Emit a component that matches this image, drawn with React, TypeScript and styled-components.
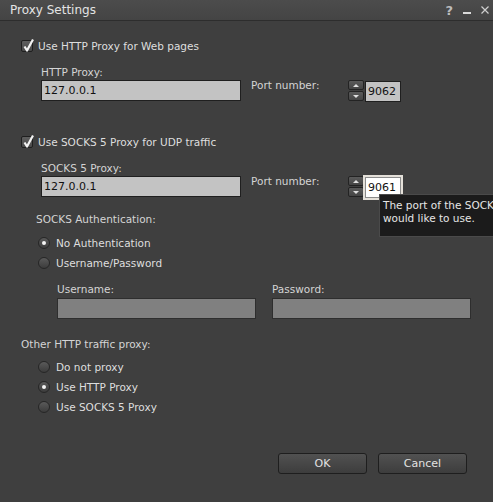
import React from 'react';
import styled, { createGlobalStyle } from 'styled-components';

const GlobalStyle = createGlobalStyle`
    html, body {
        margin: 0;
        padding: 0;
        background: #3f3f3f;
    }
    body {
        font-family: "DejaVu Sans", "Liberation Sans", sans-serif;
    }
`;

const Window = styled.div`
    position: relative;
    width: 493px;
    height: 502px;
    background: #3f3f3f;
    overflow: hidden;
    display: flex;
    flex-direction: column;
`;

const TitleBar = styled.div`
    height: 20px;
    flex-shrink: 0;
    display: flex;
    align-items: center;
    padding: 0 4px 0 10px;
    background: linear-gradient(#4c4c4c, #444444);
    border-bottom: 1px solid #2d2d2d;
`;

const Title = styled.span`
    flex: 1;
    font-size: 12px;
    color: #e4e4e4;
`;

const TitleIcons = styled.div`
    display: flex;
    align-items: center;
    gap: 10px;
`;

const HelpIcon = styled.span`
    font-size: 13px;
    font-weight: bold;
    color: #bcbcbc;
    line-height: 13px;
`;

const MinimizeIcon = styled.span`
    width: 8px;
    height: 2px;
    margin-top: 6px;
    background: #dadada;
`;

const Body = styled.div`
    flex: 1;
    display: flex;
    flex-direction: column;
    padding-left: 21px;
`;

const CheckRow = styled.label<{ $top: number }>`
    display: flex;
    align-items: center;
    gap: 5px;
    height: 12px;
    margin-top: ${p => p.$top}px;
    font-size: 10.5px;
    line-height: 12px;
    color: #dedede;
`;

const CheckBox = styled.span`
    position: relative;
    width: 12px;
    height: 12px;
    box-sizing: border-box;
    border: 1px solid #1f1f1f;
    border-radius: 2px;
    background: linear-gradient(#5e5e5e, #4a4a4a);

    svg {
        position: absolute;
        left: 0;
        top: -3px;
    }
`;

const Caption = styled.div<{ $top: number; $left: number }>`
    margin-top: ${p => p.$top}px;
    margin-left: ${p => p.$left}px;
    height: 12px;
    font-size: 10.5px;
    line-height: 12px;
    color: #d4d4d4;
`;

const InputRow = styled.div<{ $top: number }>`
    display: flex;
    align-items: flex-start;
    margin-top: ${p => p.$top}px;
    margin-left: 20px;
`;

const TextInput = styled.input<{ $width: number }>`
    box-sizing: border-box;
    width: ${p => p.$width}px;
    height: 21px;
    margin: 0;
    padding: 0 2px;
    border: 1px solid #1f1f1f;
    background: #c3c3c3;
    color: #111;
    font-family: "DejaVu Sans", sans-serif;
    font-size: 11px;
    outline: none;

    &:disabled {
        background: #808080;
        border-color: #2e2e2e;
    }
`;

const PortLabel = styled.span`
    width: 97px;
    margin-top: -1px;
    margin-left: 10px;
    font-size: 10.5px;
    line-height: 12px;
    color: #d4d4d4;
`;

const Spinner = styled.div`
    display: flex;
    flex-direction: column;
    gap: 1px;
    width: 16px;
    margin-right: 1px;
`;

const SpinButton = styled.span<{ $down?: boolean }>`
    box-sizing: border-box;
    height: 10px;
    display: flex;
    align-items: center;
    justify-content: center;
    border: 1px solid #232323;
    border-radius: 2px;
    background: linear-gradient(#5a5a5a, #444444);

    &::after {
        content: "";
        border-left: 3px solid transparent;
        border-right: 3px solid transparent;
        ${p => (p.$down ? 'border-top: 3px solid #e0e0e0;' : 'border-bottom: 3px solid #e0e0e0;')}
    }
`;

const PortField = styled.div`
    position: relative;
`;

const PortInput = styled(TextInput)<{ $focused?: boolean }>`
    ${p =>
        p.$focused &&
        `
        background: #ffffff;
        border-color: #8a8a8a;
        box-shadow: 0 0 0 2px #e4e0d9;
    `}
`;

const Tooltip = styled.div`
    position: absolute;
    left: 14px;
    top: 18px;
    padding: 4px 8px 11px 3px;
    background: #1b1b1b;
    border: 1px solid #4a4a4a;
    font-size: 10.5px;
    line-height: 13px;
    color: #e6e6e6;
    white-space: nowrap;
    z-index: 2;
`;

const RadioRow = styled.label<{ $top: number }>`
    display: flex;
    align-items: center;
    gap: 6px;
    height: 12px;
    margin-top: ${p => p.$top}px;
    margin-left: 17px;
    font-size: 10.5px;
    line-height: 12px;
    color: #dedede;
`;

const RadioDot = styled.span<{ $checked?: boolean }>`
    width: 12px;
    height: 12px;
    box-sizing: border-box;
    border: 1px solid #262626;
    border-radius: 50%;
    background: linear-gradient(#5a5a5a, #3c3c3c);
    display: flex;
    align-items: center;
    justify-content: center;

    &::after {
        content: "";
        width: 4px;
        height: 4px;
        border-radius: 50%;
        background: ${p => (p.$checked ? '#f4f4f4' : 'transparent')};
    }
`;

const CredentialGrid = styled.div`
    display: grid;
    grid-template-columns: 199px 199px;
    column-gap: 16px;
    margin-left: 36px;
`;

const CredentialLabel = styled.span`
    margin-top: 14px;
    height: 12px;
    font-size: 10.5px;
    line-height: 12px;
    color: #d4d4d4;
`;

const CredentialInput = styled(TextInput)`
    margin-top: 3px;
`;

const ButtonRow = styled.div`
    display: flex;
    justify-content: flex-end;
    gap: 11px;
    margin-top: 40px;
    padding-right: 26px;
`;

const Button = styled.button`
    box-sizing: border-box;
    width: 89px;
    height: 21px;
    border: 1px solid #1e1e1e;
    border-radius: 3px;
    background: linear-gradient(#515151, #3d3d3d);
    color: #e2e2e2;
    font-family: "DejaVu Sans", sans-serif;
    font-size: 11px;
    padding: 0;
`;

const Check = () => (
    <CheckBox>
        <svg width="13" height="15" viewBox="0 0 13 15">
            <polyline points="2.5,8.5 5,12.5 11,1.5" fill="none" stroke="#f2f2f2" strokeWidth="2.2" strokeLinejoin="round" />
        </svg>
    </CheckBox>
);

const PortControl = ({ value, focused }: { value: string; focused?: boolean }) => (
    <>
        <Spinner>
            <SpinButton />
            <SpinButton $down />
        </Spinner>
        <PortField>
            <PortInput $width={36} $focused={focused} readOnly defaultValue={value} />
            {focused && (
                <Tooltip>
                    The port of the SOCKS 5 proxy you
                    <br />
                    would like to use.
                </Tooltip>
            )}
        </PortField>
    </>
);

export default function App() {
    return (
        <Window>
            <GlobalStyle />

            <TitleBar>
                <Title>Proxy Settings</Title>
                <TitleIcons>
                    <HelpIcon>?</HelpIcon>
                    <MinimizeIcon />
                    <svg width="8" height="8" viewBox="0 0 8 8">
                        <path d="M0.5 0.5 L7.5 7.5 M7.5 0.5 L0.5 7.5" stroke="#cfcfcf" strokeWidth="1.2" />
                    </svg>
                </TitleIcons>
            </TitleBar>

            <Body>
                <CheckRow $top={19}>
                    <Check />
                    Use HTTP Proxy for Web pages
                </CheckRow>

                <Caption $top={14} $left={20}>HTTP Proxy:</Caption>
                <InputRow $top={2}>
                    <TextInput $width={200} readOnly defaultValue="127.0.0.1" />
                    <PortLabel>Port number:</PortLabel>
                    <PortControl value="9062" />
                </InputRow>

                <CheckRow $top={34}>
                    <Check />
                    Use SOCKS 5 Proxy for UDP traffic
                </CheckRow>

                <Caption $top={14} $left={20}>SOCKS 5 Proxy:</Caption>
                <InputRow $top={2}>
                    <TextInput $width={200} readOnly defaultValue="127.0.0.1" />
                    <PortLabel>Port number:</PortLabel>
                    <PortControl value="9061" focused />
                </InputRow>

                <Caption $top={15} $left={15}>SOCKS Authentication:</Caption>
                <RadioRow $top={12}>
                    <RadioDot $checked />
                    No Authentication
                </RadioRow>
                <RadioRow $top={8}>
                    <RadioDot />
                    Username/Password
                </RadioRow>

                <CredentialGrid>
                    <CredentialLabel>Username:</CredentialLabel>
                    <CredentialLabel>Password:</CredentialLabel>
                    <CredentialInput $width={199} disabled />
                    <CredentialInput $width={199} disabled />
                </CredentialGrid>

                <Caption $top={19} $left={0}>Other HTTP traffic proxy:</Caption>
                <RadioRow $top={11}>
                    <RadioDot />
                    Do not proxy
                </RadioRow>
                <RadioRow $top={8}>
                    <RadioDot $checked />
                    Use HTTP Proxy
                </RadioRow>
                <RadioRow $top={8}>
                    <RadioDot />
                    Use SOCKS 5 Proxy
                </RadioRow>

                <ButtonRow>
                    <Button>OK</Button>
                    <Button>Cancel</Button>
                </ButtonRow>
            </Body>
        </Window>
    );
}
